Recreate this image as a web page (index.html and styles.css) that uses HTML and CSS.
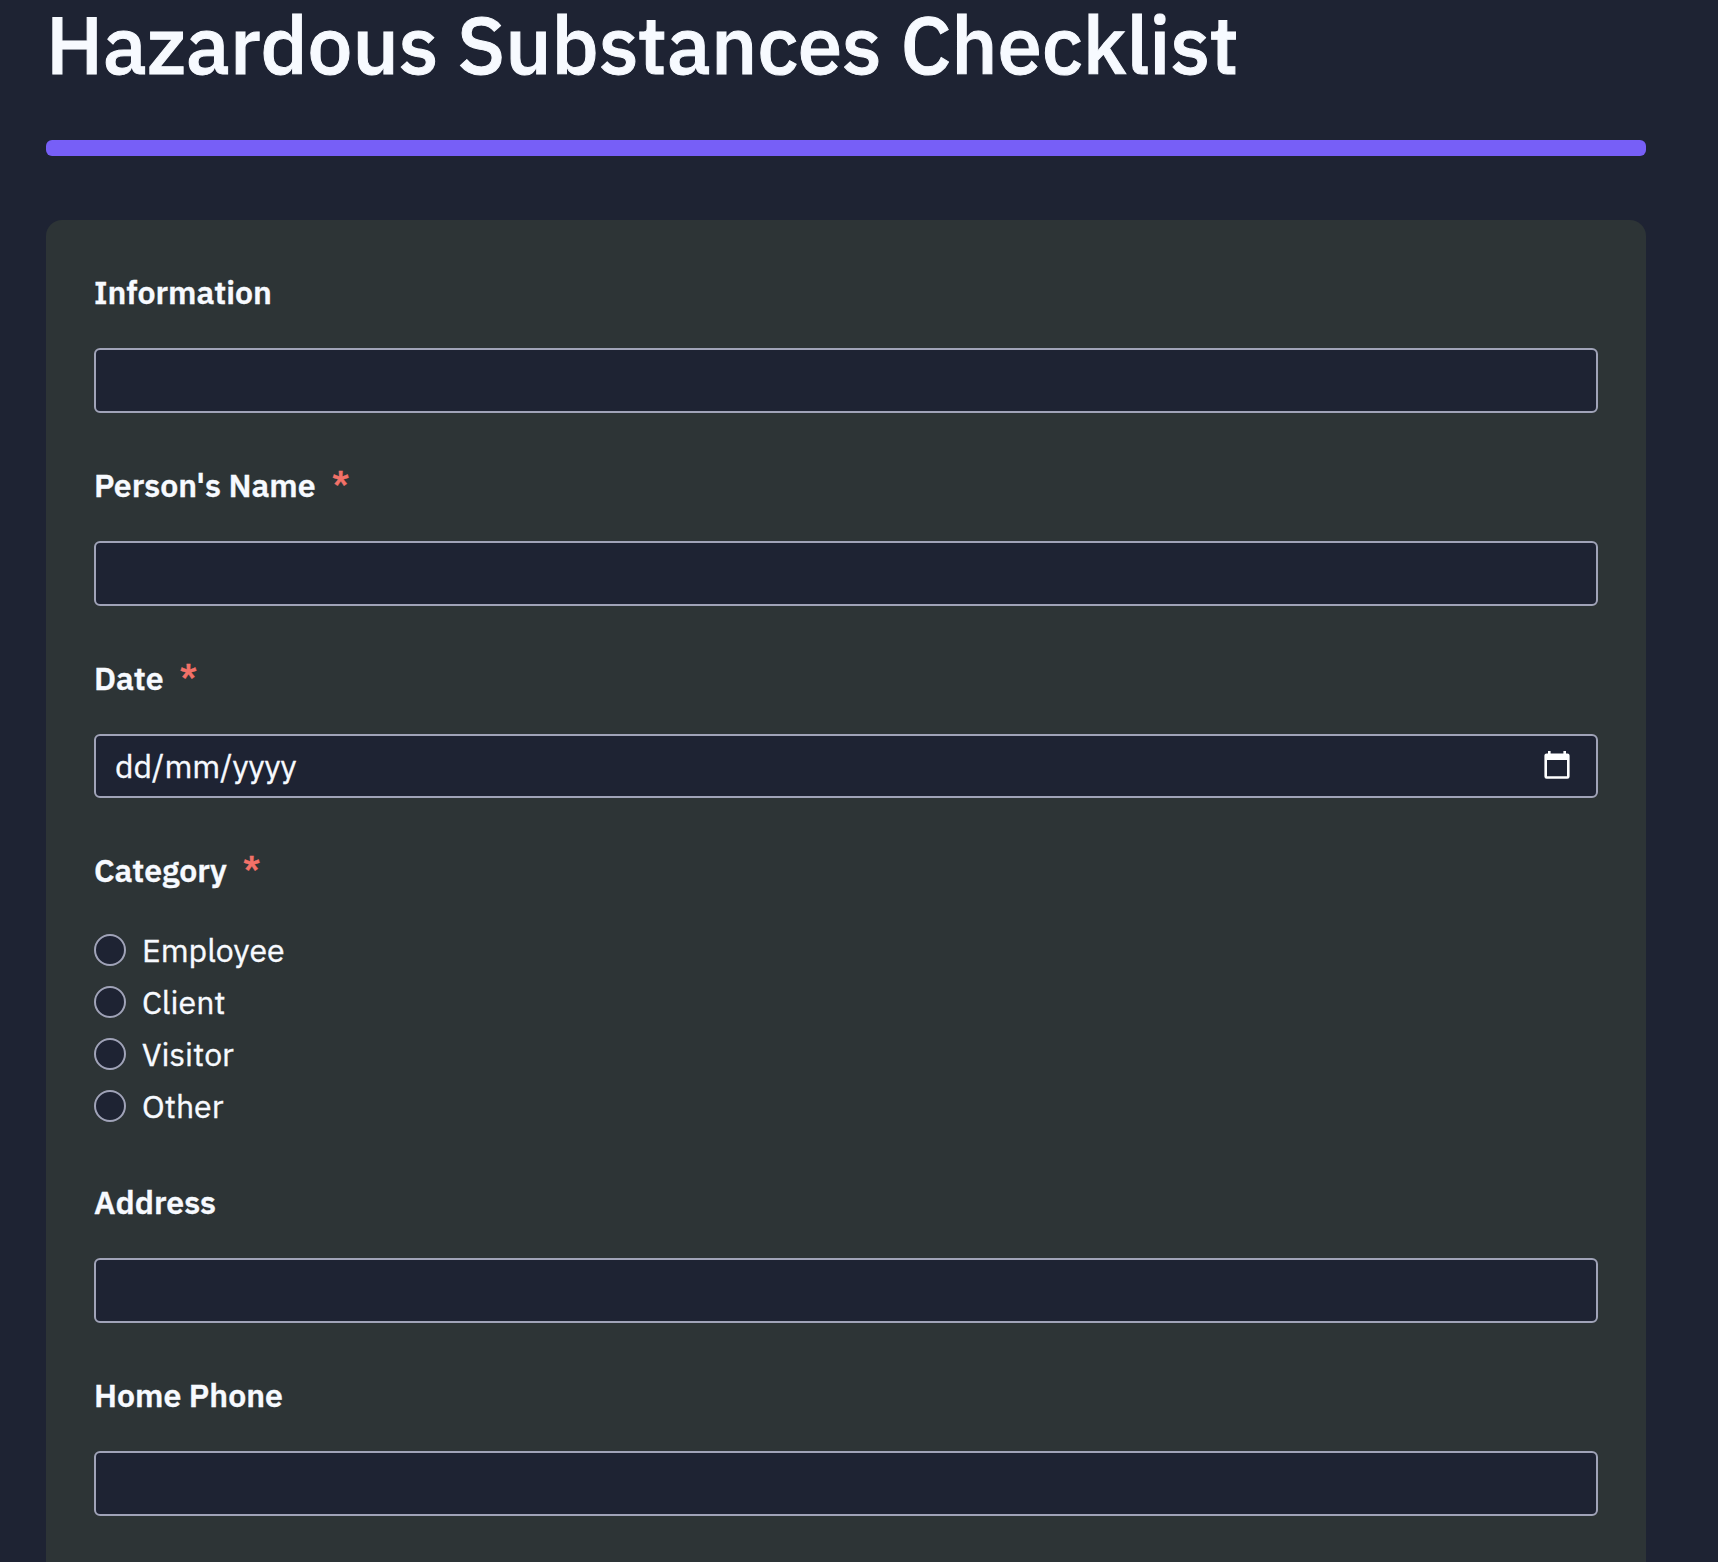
FILE: index.html
```html
<!DOCTYPE html>
<html lang="en">
<head>
<meta charset="utf-8">
<title>Hazardous Substances Checklist</title>
<link rel="stylesheet" href="styles.css">
</head>
<body>
<main class="page">
  <h1 class="title">Hazardous Substances Checklist</h1>
  <div class="accent"></div>
  <form class="card">
    <div class="field">
      <label class="label" for="info">Information</label>
      <input class="input" id="info" type="text">
    </div>
    <div class="field">
      <label class="label" for="name">Person's Name<span class="required">*</span></label>
      <input class="input" id="name" type="text">
    </div>
    <div class="field">
      <div class="label">Date<span class="required">*</span></div>
      <div class="input date">
        <span>dd/mm/yyyy</span>
        <svg class="calendar" width="26" height="28" viewBox="0 0 26 28" fill="#fff"><path fill-rule="evenodd" d="M4 0h2.6v2.400h12.800V0H22v2.400h1.400A2.200 2.200 0 0 1 25.600 4.600V25.500A2.200 2.200 0 0 1 23.400 27.700H2.600A2.200 2.200 0 0 1 .4 25.500V4.600A2.200 2.200 0 0 1 2.600 2.400H4zM3 9v16.200h20V9z"/></svg>
      </div>
    </div>
    <div class="field">
      <div class="label">Category<span class="required">*</span></div>
      <div class="options">
        <label class="option"><input class="radio" type="radio" name="category">Employee</label>
        <label class="option"><input class="radio" type="radio" name="category">Client</label>
        <label class="option"><input class="radio" type="radio" name="category">Visitor</label>
        <label class="option"><input class="radio" type="radio" name="category">Other</label>
      </div>
    </div>
    <div class="field">
      <label class="label" for="address">Address</label>
      <input class="input" id="address" type="text">
    </div>
    <div class="field">
      <label class="label" for="phone">Home Phone</label>
      <input class="input" id="phone" type="text">
    </div>
  </form>
</main>
</body>
</html>
```
FILE: styles.css
```css
* { box-sizing: border-box; }
html { background: #1e2333; }
body {
  margin: 0;
  background: #1e2333;
  color: #f7faff;
  font-family: "IBM Plex Sans", Roboto, "Liberation Sans", sans-serif;
  font-size: 32px;
  -webkit-text-stroke: 0.35px currentColor;
}
.page { display: flex; flex-direction: column; width: 1600px; height: 1562px; margin-left: 46px; }
.title {
  flex: none;
  margin: 0;
  height: 92px;
  font-size: 80px;
  font-weight: 500;
  line-height: 88px;
  letter-spacing: 0;
  white-space: nowrap;
  -webkit-text-stroke-width: 1px;
}
.accent { flex: none; height: 16px; margin: 48px 0 64px; border-radius: 6px; background: #775ff7; }
.card {
  flex: 1;
  display: flex;
  flex-direction: column;
  gap: 48px;
  padding: 48px 48px 0;
  border-radius: 16px 16px 0 0;
  background: #2d3436;
}
.field { display: flex; flex-direction: column; gap: 32px; }
.label { display: flex; gap: 16px; font-weight: 600; line-height: 48px; white-space: nowrap; }
.required { margin-top: -2px; color: #f27168; }
.label { height: 48px; }
.input {
  width: 100%;
  height: 65px;
  padding: 0 19px;
  border: 2px solid #a0a3b8;
  border-radius: 6px;
  background: #1e2333;
  color: inherit;
  font: inherit;
}
.date { display: flex; height: 64px; align-items: center; justify-content: space-between; padding-right: 26px; }
.calendar { margin-top: -3px; }
.options { display: flex; flex-direction: column; gap: 4px; }
.option { display: flex; align-items: center; gap: 16px; height: 48px; line-height: 48px; }
.radio {
  appearance: none;
  width: 32px;
  height: 32px;
  margin: 0;
  border: 2px solid #a0a3b8;
  border-radius: 50%;
  background: #1e2333;
}
```
